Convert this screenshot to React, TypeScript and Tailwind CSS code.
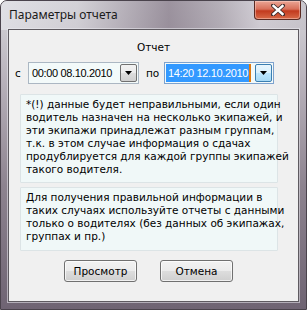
import React from "react";

const body = "font-['Tahoma','DejaVu_Sans',sans-serif] text-[10.5px] leading-[13px] text-black";

function DropBtn({ active }: { active?: boolean }) {
  return (
    <div
      className={
        "w-[17px] h-[18px] flex items-center justify-center rounded-[2px] border " +
        (active
          ? "border-[#3c7fb1] bg-[linear-gradient(to_bottom,#eaf6fd_0%,#d9f0fc_50%,#bee6fd_51%,#a7d9f5_100%)]"
          : "border-[#707070] bg-[linear-gradient(to_bottom,#f2f2f2_0%,#ebebeb_50%,#dddddd_51%,#cfcfcf_100%)]")
      }
    >
      <svg width="7" height="4" viewBox="0 0 7 4">
        <path d="M0 0 H7 L3.5 4 Z" fill="#000" />
      </svg>
    </div>
  );
}

function Combo({ value, focused }: { value: string; focused?: boolean }) {
  return (
    <div
      className={
        "h-[22px] flex items-center pl-[1px] pr-[1px] border bg-[#f3fafa] font-['Liberation_Sans',Arial,sans-serif] text-[11px] tracking-[-0.35px] " +
        (focused ? "border-[#7da2ce] w-[110px]" : "border-[#abb7c3] w-[111px]")
      }
    >
      <div className="flex-1 flex items-center whitespace-nowrap overflow-hidden">
        {focused ? (
          <span className="flex items-center">
            <span className="bg-[#3399ff] text-white pl-[2px] pr-[1px] leading-[18px]">{value}</span>
            <span className="w-[2px] h-[18px] bg-[#e07a10]" />
          </span>
        ) : (
          <span className="pl-[2px] leading-[18px]">{value}</span>
        )}
      </div>
      <DropBtn active={focused} />
    </div>
  );
}

function Btn({ label }: { label: string }) {
  return (
    <div className="w-[73px] h-[22px] rounded-[3px] border border-[#707070] bg-[linear-gradient(to_bottom,#f2f2f2_0%,#ebebeb_50%,#dddddd_51%,#cfcfcf_100%)] shadow-[inset_0_0_0_1px_rgba(255,255,255,0.7)] flex items-center justify-center">
      {label}
    </div>
  );
}

export default function App() {
  return (
    <div className="w-[307px] h-[310px] relative overflow-hidden rounded-t-[7px] bg-[linear-gradient(to_bottom,#d6d5da_0%,#b9b3bc_25%,#8d838f_60%,#6f6473_100%)] border border-[#4a434c] flex flex-col">
      <div className="absolute inset-x-0 top-0 h-[29px] bg-[linear-gradient(to_right,rgba(228,228,233,0.75)_0%,rgba(210,208,214,0.55)_25%,rgba(125,112,127,0.65)_55%,rgba(150,140,152,0.5)_72%,rgba(208,203,211,0.65)_85%,rgba(190,186,194,0.5)_100%)]" />
      <div className="relative h-[28px] flex items-start justify-between">
        <div className="pl-[8px] pt-[6px] font-['Segoe_UI','Noto_Sans',sans-serif] text-[12px] leading-[16px] text-[#1a1a1a]">
          Параметры отчета
        </div>
        <div className="mr-[5px] w-[47px] h-[19px] rounded-b-[4px] border border-t-0 border-[#5a2a22] bg-[linear-gradient(to_bottom,#eba595_0%,#d8705a_45%,#c23a1e_55%,#d86a48_100%)] shadow-[inset_0_0_0_1px_rgba(255,220,210,0.45)] flex items-center justify-center">
          <svg width="14" height="12" viewBox="0 0 14 12">
            <path d="M2 1.5 L12 10.5 M12 1.5 L2 10.5" stroke="#3a2a2a" strokeWidth="4" strokeLinecap="round" />
            <path d="M2.5 2 L11.5 10 M11.5 2 L2.5 10" stroke="#fff" strokeWidth="2.4" strokeLinecap="square" />
          </svg>
        </div>
      </div>
      <div className={"relative mx-[7px] mb-[7px] flex-1 bg-[#f0f0f0] border border-[#5e5a60] shadow-[0_0_0_1px_rgba(235,235,240,0.55)] flex flex-col " + body}>
        <div className="text-center pt-[11px] h-[32px]">Отчет</div>
        <div className="flex items-center h-[22px]">
          <span className="ml-[6px] w-[13px]">с</span>
          <Combo value="00:00 08.10.2010" />
          <span className="ml-[7px] w-[18px]">по</span>
          <Combo value="14:20 12.10.2010" focused />
        </div>
        <div className="ml-[11px] mt-[10px] w-[258px] h-[89px] border border-[#dce4e6] bg-[#f0f8f8] rounded-[1px] px-[5px] pt-[3px]">
          <div className="whitespace-nowrap">*(!) данные будет неправильными, если один</div>
          <div className="whitespace-nowrap">водитель назначен на несколько экипажей, и</div>
          <div className="whitespace-nowrap">эти экипажи принадлежат разным группам,</div>
          <div className="whitespace-nowrap">т.к. в этом случае информация о сдачах</div>
          <div className="whitespace-nowrap">продублируется для каждой группы экипажей</div>
          <div className="whitespace-nowrap">такого водителя.</div>
        </div>
        <div className="ml-[11px] mt-[4px] w-[258px] h-[64px] border border-[#dce4e6] bg-[#f0f8f8] rounded-[1px] px-[5px] pt-[3px]">
          <div className="whitespace-nowrap">Для получения правильной информации в</div>
          <div className="whitespace-nowrap">таких случаях используйте отчеты с данными</div>
          <div className="whitespace-nowrap">только о водителях (без данных об экипажах,</div>
          <div className="whitespace-nowrap">группах и пр.)</div>
        </div>
        <div className="flex mt-[9px] ml-[55px] gap-[23px]">
          <Btn label="Просмотр" />
          <Btn label="Отмена" />
        </div>
      </div>
    </div>
  );
}
